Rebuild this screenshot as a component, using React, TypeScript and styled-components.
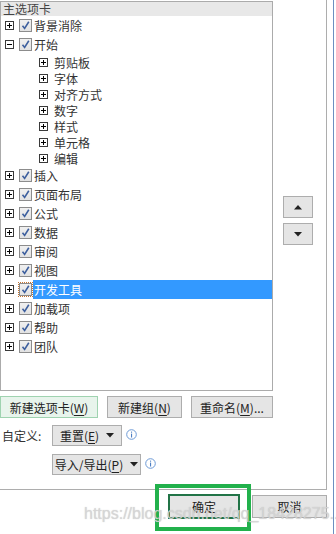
import React from 'react';
import styled, { createGlobalStyle } from 'styled-components';

const GlobalStyle = createGlobalStyle`
  html, body {
    margin: 0;
    padding: 0;
    background: #fff;
  }
  body {
    font-family: "Noto Sans CJK SC", "Noto Sans", sans-serif;
    font-size: 12px;
    color: #333;
  }
`;

const Page = styled.div`
  position: relative;
  width: 336px;
  height: 534px;
  overflow: hidden;
  display: flex;
  background: #fff;
`;

const Dialog = styled.div`
  width: 327px;
  display: flex;
  flex-direction: column;
`;

const EdgeLine = styled.div`
  margin-left: 6px;
  width: 1px;
  height: 100%;
  background: #6b8fc0;
`;

const Main = styled.div`
  height: 490px;
  box-sizing: border-box;
  border-right: 1px solid #adadad;
  border-bottom: 1px solid #adadad;
  display: flex;
  flex-direction: column;
`;

const Top = styled.div`
  display: flex;
`;

const Tree = styled.div`
  margin-top: 1px;
  width: 273px;
  height: 390px;
  box-sizing: border-box;
  border: 1px solid #ababab;
  display: flex;
  flex-direction: column;
`;

const TreeHeader = styled.div`
  height: 14px;
  line-height: 14px;
  padding-left: 2px;
  background: #e8e8e8;
  color: #444;
  font-size: 12px;
`;

const Row = styled.div<{ $sub?: boolean }>`
  height: ${p => (p.$sub ? 16 : 19)}px;
  display: flex;
  align-items: center;
  padding-left: ${p => (p.$sub ? 38 : 4)}px;
`;

const Expander = styled.span`
  width: 9px;
  height: 9px;
  box-sizing: border-box;
  border: 1px solid #3a3a3a;
  display: inline-flex;
  align-items: center;
  justify-content: center;
  background: #fff;
  flex: none;
`;

const Check = styled.span<{ $focus?: boolean }>`
  margin-left: 5px;
  width: 13px;
  height: 13px;
  box-sizing: border-box;
  border: 1px solid #8c8c8c;
  background: linear-gradient(#f0f0f0, #e2e2e2);
  display: inline-flex;
  align-items: center;
  justify-content: center;
  flex: none;
  outline: ${p => (p.$focus ? '1px dotted #c8742e' : 'none')};
  outline-offset: 0px;
`;

const Label = styled.span<{ $selected?: boolean; $sub?: boolean }>`
  margin-left: ${p => (p.$sub ? 5 : 1)}px;
  padding-left: 1px;
  flex: 1;
  height: 100%;
  display: flex;
  align-items: center;
  background: ${p => (p.$selected ? '#3399ff' : 'transparent')};
  color: ${p => (p.$selected ? '#fff' : '#333')};
  font-size: 12px;
`;

const Side = styled.div`
  padding: 196px 0 0 10px;
  display: flex;
  flex-direction: column;
  gap: 5px;
`;

const ArrowButton = styled.button`
  width: 30px;
  height: 22px;
  padding: 0;
  box-sizing: border-box;
  border: 1px solid #adadad;
  background: #e5e5e5;
  display: flex;
  align-items: center;
  justify-content: center;
`;

const ButtonRow = styled.div`
  margin-top: 5px;
  display: flex;
  gap: 9px;
`;

const Btn = styled.button<{ $w: number; $h?: number; $green?: boolean }>`
  width: ${p => p.$w}px;
  height: ${p => p.$h ?? 22}px;
  padding: 0;
  box-sizing: border-box;
  border: 1px solid ${p => (p.$green ? '#9fd3b0' : '#adadad')};
  background: ${p => (p.$green ? '#e8f4ec' : '#e5e5e5')};
  font-family: "Noto Sans CJK SC", "Noto Sans", sans-serif;
  font-size: 12px;
  color: #222;
  display: flex;
  align-items: center;
  justify-content: center;
  gap: 7px;
`;

const Key = styled.span`
  text-decoration: underline;
  text-underline-offset: 2px;
`;

const OptionRow = styled.div<{ $top: number }>`
  margin-top: ${p => p.$top}px;
  display: flex;
  align-items: center;
`;

const OptionLabel = styled.span`
  width: 52px;
  padding-left: 2px;
  box-sizing: border-box;
  color: #333;
  font-size: 12px;
`;

const InfoWrap = styled.span`
  margin-left: 4px;
  display: inline-flex;
  margin-top: -3px;
`;

const Footer = styled.div`
  display: flex;
  gap: 12px;
  padding: 4px 0 0 168px;
`;

const OkButton = styled(Btn)`
  border: 2px solid #217346;
  margin-top: 0;
`;

const CancelButton = styled(Btn)`
  margin-top: 1px;
`;

const Frame = styled.div`
  position: absolute;
  left: 155px;
  top: 484px;
  width: 96px;
  height: 47px;
  box-sizing: border-box;
  border: 4px solid #22b14c;
  pointer-events: none;
`;

const Watermark = styled.div`
  position: absolute;
  left: 84px;
  top: 505px;
  font-family: "Liberation Sans", Arial, sans-serif;
  font-size: 16px;
  color: rgba(215, 215, 215, 0.85);
  text-shadow: 0 0 1px rgba(150, 150, 150, 0.5);
  white-space: nowrap;
  pointer-events: none;
`;

const Plus = ({ minus }: { minus?: boolean }) => (
  <svg width="7" height="7" viewBox="0 0 7 7">
    <rect x="1" y="3" width="5" height="1" fill="#000" />
    {!minus && <rect x="3" y="1" width="1" height="5" fill="#000" />}
  </svg>
);

const Tick = () => (
  <svg width="11" height="11" viewBox="0 0 11 11">
    <path d="M2.5 5.8 L4.6 8.4 L8.8 1.8" fill="none" stroke="#3d5f9e" strokeWidth="1.6" />
  </svg>
);

const Triangle = ({ down, color = '#222' }: { down?: boolean; color?: string }) => (
  <svg width="8" height="5" viewBox="0 0 8 5">
    <path d={down ? 'M0 0 H8 L4 4.5 Z' : 'M0 4.5 H8 L4 0 Z'} fill={color} />
  </svg>
);

const Info = () => (
  <svg width="11" height="11" viewBox="0 0 11 11">
    <circle cx="5.5" cy="5.5" r="4.8" fill="#fff" stroke="#6d9ad6" strokeWidth="1" />
    <rect x="5" y="2.6" width="1.1" height="1.1" fill="#4d7fc4" />
    <rect x="5" y="4.6" width="1.1" height="3.9" fill="#4d7fc4" />
  </svg>
);

type Item = { label: string; sub?: boolean; open?: boolean; selected?: boolean };

const items: Item[] = [
  { label: '背景消除' },
  { label: '开始', open: true },
  { label: '剪贴板', sub: true },
  { label: '字体', sub: true },
  { label: '对齐方式', sub: true },
  { label: '数字', sub: true },
  { label: '样式', sub: true },
  { label: '单元格', sub: true },
  { label: '编辑', sub: true },
  { label: '插入' },
  { label: '页面布局' },
  { label: '公式' },
  { label: '数据' },
  { label: '审阅' },
  { label: '视图' },
  { label: '开发工具', selected: true },
  { label: '加载项' },
  { label: '帮助' },
  { label: '团队' },
];

export default function App() {
  return (
    <Page>
      <GlobalStyle />
      <Dialog>
        <Main>
          <Top>
            <Tree>
              <TreeHeader>主选项卡</TreeHeader>
              {items.map(item => (
                <Row key={item.label} $sub={item.sub}>
                  <Expander>
                    <Plus minus={item.open} />
                  </Expander>
                  {!item.sub && (
                    <Check $focus={item.selected}>
                      <Tick />
                    </Check>
                  )}
                  <Label $selected={item.selected} $sub={item.sub}>
                    {item.label}
                  </Label>
                </Row>
              ))}
            </Tree>
            <Side>
              <ArrowButton>
                <Triangle />
              </ArrowButton>
              <ArrowButton>
                <Triangle down />
              </ArrowButton>
            </Side>
          </Top>
          <ButtonRow>
            <Btn $w={98} $green>
              <span>
                新建选项卡(<Key>W</Key>)
              </span>
            </Btn>
            <Btn $w={75}>
              <span>
                新建组(<Key>N</Key>)
              </span>
            </Btn>
            <Btn $w={82}>
              <span>
                重命名(<Key>M</Key>)...
              </span>
            </Btn>
          </ButtonRow>
          <OptionRow $top={7}>
            <OptionLabel>自定义:</OptionLabel>
            <Btn $w={70} $h={21}>
              <span>
                重置(<Key>E</Key>)
              </span>
              <Triangle down />
            </Btn>
            <InfoWrap>
              <Info />
            </InfoWrap>
          </OptionRow>
          <OptionRow $top={8}>
            <OptionLabel />
            <Btn $w={89} $h={21}>
              <span>
                导入/导出(<Key>P</Key>)
              </span>
              <Triangle down />
            </Btn>
            <InfoWrap>
              <Info />
            </InfoWrap>
          </OptionRow>
        </Main>
        <Footer>
          <OkButton $w={72} $h={25}>
            确定
          </OkButton>
          <CancelButton $w={75} $h={23}>
            取消
          </CancelButton>
        </Footer>
      </Dialog>
      <EdgeLine />
      <Frame />
      <Watermark>https://blog.csdn.net/qq_18428275...</Watermark>
    </Page>
  );
}
